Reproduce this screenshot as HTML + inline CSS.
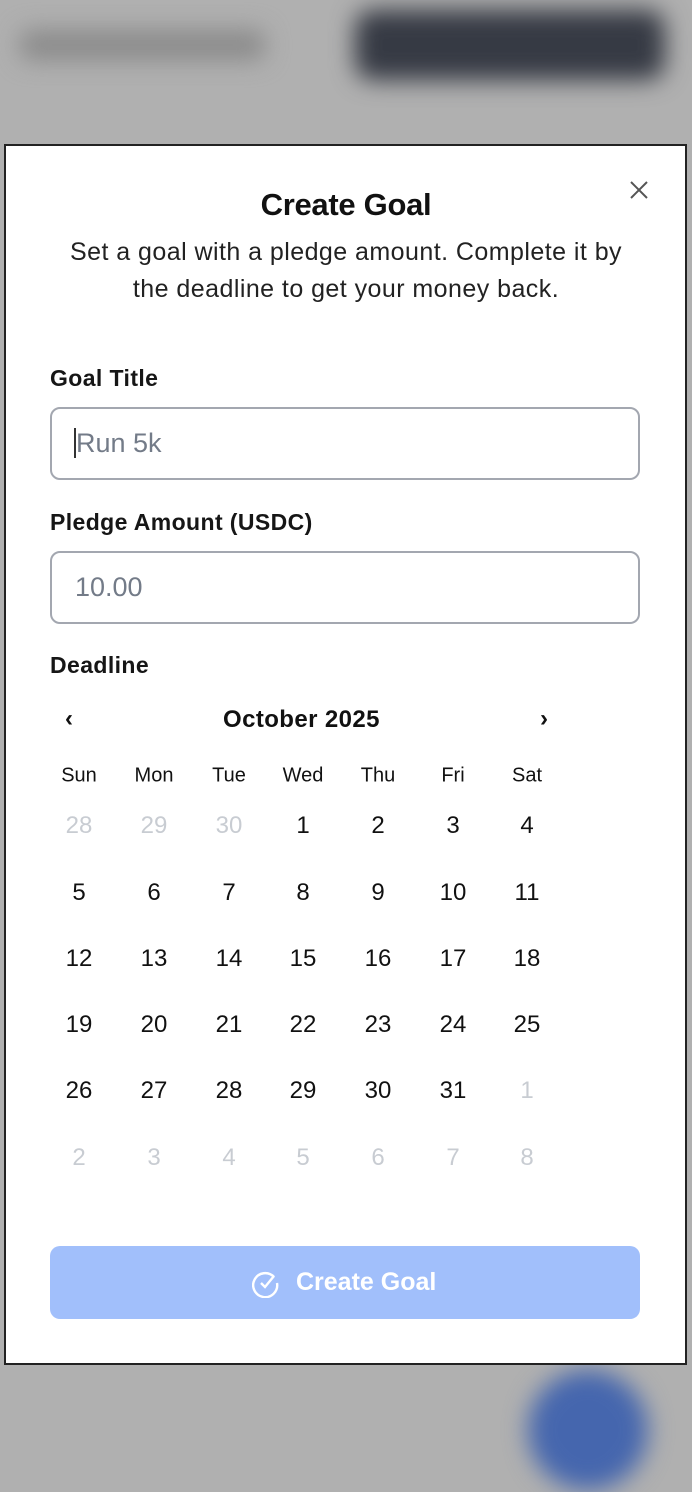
<!DOCTYPE html>
<html><head><style>
*{margin:0;padding:0;box-sizing:border-box}
body{width:692px;height:1492px;background:#b0b0b0;position:relative;overflow:hidden;font-family:"Liberation Sans",Arial,sans-serif;color:#111}
.a{position:absolute}
.blur{filter:blur(12px)}
.modal{position:absolute;left:4px;top:144px;width:683px;height:1221px;background:#fff;border:2px solid #222}
.t{position:absolute;white-space:nowrap}
.lb{font-size:23px;font-weight:bold;letter-spacing:0.4px;color:#161616}
.inp{position:absolute;left:50px;width:590px;height:73px;border:2px solid #a3a7b0;border-radius:10px;font-size:27px;color:#737b88;padding-left:23px;line-height:69px}
.c{position:absolute;width:60px;text-align:center;font-size:24px;transform:translate(-30px,-50%)}
.g{color:#c8ccd2}
.h{font-size:20px}
</style></head><body>
<div class="a blur" style="left:20px;top:30px;width:245px;height:30px;background:#8a8a8a;border-radius:10px"></div>
<div class="a blur" style="left:355px;top:10px;width:310px;height:70px;background:#363a44;border-radius:18px"></div>
<div class="a blur" style="left:528px;top:1370px;width:120px;height:120px;background:#4566ae;border-radius:50%"></div>
<div class="modal"></div>
<div class="t" style="left:0;width:692px;text-align:center;top:187px;font-size:31px;font-weight:bold;letter-spacing:-0.3px">Create Goal</div>
<svg class="a" style="left:629px;top:180px" width="20" height="20" viewBox="0 0 20 20"><path d="M2 2L18 18M18 2L2 18" stroke="#555" stroke-width="2"/></svg>
<div class="t" style="left:0;width:692px;text-align:center;top:234px;font-size:25px;letter-spacing:0.45px;line-height:37px;color:#222">Set a goal with a pledge amount. Complete it by<br>the deadline to get your money back.</div>
<div class="t lb" style="left:50px;top:365px">Goal Title</div>
<div class="inp" style="top:407px"><span style="border-left:2px solid #333;margin-left:-1px"></span>Run 5k</div>
<div class="t lb" style="left:50px;top:509px">Pledge Amount (USDC)</div>
<div class="inp" style="top:551px">10.00</div>
<div class="t lb" style="left:50px;top:652px">Deadline</div>
<div class="t" style="left:65px;top:705px;font-size:24px;font-weight:bold">‹</div>
<div class="t" style="left:540px;top:705px;font-size:24px;font-weight:bold">›</div>
<div class="t" style="left:223px;top:706px;font-size:24px;font-weight:bold;letter-spacing:0.4px">October 2025</div>
<div id="cal"></div>
<div class="a" style="left:50px;top:1246px;width:590px;height:73px;background:#a1bffb;border-radius:10px"></div>
<svg class="a" style="left:252px;top:1268px" width="28" height="30" viewBox="0 0 28 30"><path d="M22 9A12 12 0 1 0 25 15" fill="none" stroke="#fff" stroke-width="2.4"/><path d="M9 15l4 4 9-11" fill="none" stroke="#fff" stroke-width="2.4"/></svg>
<div class="t" style="left:296px;top:1268px;font-size:25px;color:#fff;font-weight:bold">Create Goal</div>
<script>
var xs=[79,154,229,303,378,453,527],h=["Sun","Mon","Tue","Wed","Thu","Fri","Sat"],s="";
h.forEach(function(d,i){s+='<div class="c h" style="left:'+xs[i]+'px;top:776px">'+d+'</div>'});
var days=[28,29,30];for(var i=1;i<=31;i++)days.push(i);for(i=1;i<=8;i++)days.push(i);
var ys=[826,893,959,1025,1091,1158];
days.forEach(function(d,k){var r=Math.floor(k/7),c=k%7,g=(k<3||k>=34);
s+='<div class="c'+(g?' g':'')+'" style="left:'+xs[c]+'px;top:'+ys[r]+'px">'+d+'</div>'});
document.getElementById("cal").innerHTML=s;
</script>
</body></html>
